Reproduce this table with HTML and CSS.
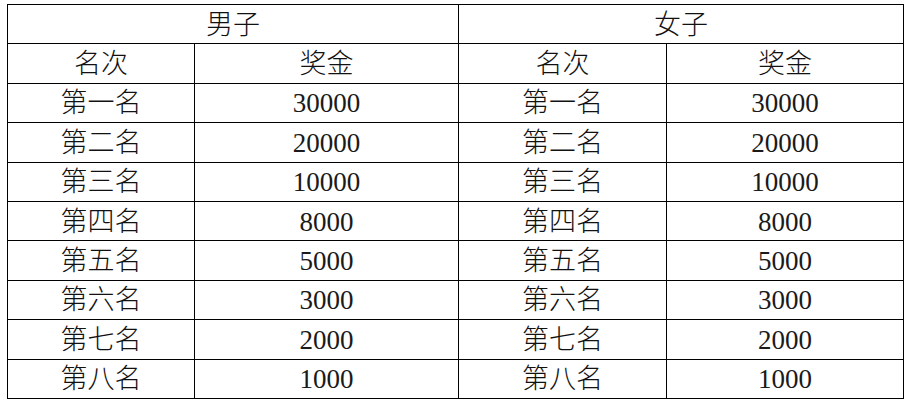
FILE: index.html
```html
<!DOCTYPE html>
<html lang="zh-CN">
<head>
<meta charset="utf-8">
<title>奖金表</title>
<link rel="stylesheet" href="styles.css">
</head>
<body>
<table class="prize">
  <colgroup>
    <col class="c1"><col class="c2"><col class="c3"><col class="c4">
  </colgroup>
  <thead>
    <tr><th colspan="2">男子</th><th colspan="2">女子</th></tr>
    <tr><th>名次</th><th>奖金</th><th>名次</th><th>奖金</th></tr>
  </thead>
  <tbody>
    <tr><td>第一名</td><td class="num">30000</td><td>第一名</td><td class="num">30000</td></tr>
    <tr><td>第二名</td><td class="num">20000</td><td>第二名</td><td class="num">20000</td></tr>
    <tr><td>第三名</td><td class="num">10000</td><td>第三名</td><td class="num">10000</td></tr>
    <tr><td>第四名</td><td class="num">8000</td><td>第四名</td><td class="num">8000</td></tr>
    <tr><td>第五名</td><td class="num">5000</td><td>第五名</td><td class="num">5000</td></tr>
    <tr><td>第六名</td><td class="num">3000</td><td>第六名</td><td class="num">3000</td></tr>
    <tr><td>第七名</td><td class="num">2000</td><td>第七名</td><td class="num">2000</td></tr>
    <tr><td>第八名</td><td class="num">1000</td><td>第八名</td><td class="num">1000</td></tr>
  </tbody>
</table>
</body>
</html>
```
FILE: styles.css
```css
html, body {
  background: #fff;
}
body {
  margin: 0;
  padding: 4px 4px 0 7px;
  font-family: "Liberation Serif", "Noto Sans CJK SC", serif;
  color: #111;
}
.prize {
  border-collapse: collapse;
  table-layout: fixed;
  width: 896px;
}
.c1 { width: 187px; }
.c2 { width: 264px; }
.c3 { width: 208px; }
.c4 { width: 237px; }
.prize th,
.prize td {
  border: 1px solid #000;
  height: 36.4px;
  padding: 2px 0 0;
  text-align: center;
  vertical-align: middle;
  font-size: 27px;
  font-weight: 300;
  line-height: 1;
}
.prize .num {
  font-family: "Liberation Serif", serif;
  font-weight: 400;
  color: #1a1a1a;
}
```
